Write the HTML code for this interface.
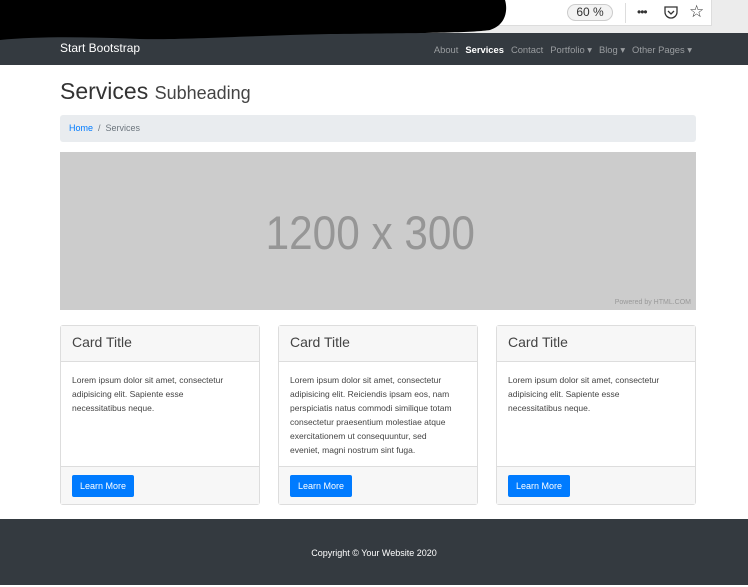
<!DOCTYPE html>
<html><head><meta charset="utf-8"><style>
*{box-sizing:border-box;margin:0;padding:0}
body{width:748px;height:585px;overflow:hidden;font-family:"Liberation Sans",sans-serif;background:#fff;position:relative}
.chrome{position:absolute;left:0;top:0;width:748px;height:33px;background:#ececec}
.chrome .bar{position:absolute;left:0;top:0;width:712px;height:26px;background:#fff;border-bottom:1px solid #ddd;border-right:1px solid #ddd}
.zoom{position:absolute;left:567px;top:4px;width:46px;height:17px;border:1px solid #ccc;border-radius:9px;background:#f3f3f3;font-size:12px;color:#333;text-align:center;line-height:15px}
.sep{position:absolute;left:625px;top:3px;width:1px;height:20px;background:#ddd}
nav{position:absolute;top:33px;left:0;width:748px;height:32px;background:#343a40}
.brand{position:absolute;left:60px;top:8px;color:#fff;font-size:12px}
.links{position:absolute;right:56px;top:11px;font-size:9.4px;color:#9a9da0}
.links span{margin-left:7px}
.links b{color:#fff}
h1{position:absolute;left:60px;top:78px;font-size:23px;font-weight:400;color:#333}
h1 small{font-size:18px;color:#444}
.bc{position:absolute;left:60px;top:115px;width:636px;height:27px;background:#e9ecef;border-radius:3px;font-size:9px;line-height:27px;padding-left:9px;color:#6c757d}
.bc a{color:#007bff}
.img{position:absolute;left:60px;top:152px;width:636px;height:158px;background:#ccc;color:#969696;font-size:47px;text-align:center;line-height:162px}
.img span{display:inline-block;transform:scaleX(0.9);margin-left:-16px}
.img i{position:absolute;right:5px;bottom:3px;font-size:7px;line-height:8px;font-style:normal;color:#999}
.card{position:absolute;top:325px;width:200px;height:180px;border:1px solid #ddd;border-radius:3px;background:#fff}
.ch{height:36px;background:#f7f7f7;border-bottom:1px solid #ddd;font-size:14px;color:#444;padding:8px 11px}
.cb{padding:11px 5px 11px 11px;font-size:8.5px;line-height:14px;color:#444;height:106px;white-space:nowrap}
.cf{position:absolute;left:0;bottom:0;width:198px;height:38px;background:#f7f7f7;border-top:1px solid #ddd}
.btn{position:absolute;left:11px;top:8px;width:62px;height:22px;background:#007bff;color:#fff;font-size:9px;line-height:22px;text-align:center;border-radius:2px}
footer{position:absolute;left:0;top:519px;width:748px;height:66px;background:#343a40;color:#fff;font-size:9px;text-align:center;line-height:68px}
</style></head><body>
<div class="chrome"><div class="bar"></div>
<div class="zoom">60 %</div><div class="sep"></div>
<div style="position:absolute;left:637px;top:5px;font-size:12px;color:#333;letter-spacing:-1px">•••</div>
<svg style="position:absolute;left:664px;top:6px" width="14" height="13"><path d="M1 1H13V6A6 6 0 0 1 1 6Z" fill="none" stroke="#333" stroke-width="1.3"/><path d="M4 5L7 8L10 5" fill="none" stroke="#333" stroke-width="1.3"/></svg>
<div style="position:absolute;left:689px;top:2px;font-size:17px;color:#333">☆</div>
</div>
<nav><div class="brand">Start Bootstrap</div>
<div class="links"><span>About</span><span><b>Services</b></span><span>Contact</span><span>Portfolio ▾</span><span>Blog ▾</span><span>Other Pages ▾</span></div></nav>
<svg style="position:absolute;left:0;top:0;z-index:5" width="520" height="45"><path d="M0 0H505C508 10 506 25 490 30C470 33 420 33 330 34C240 36 180 40 140 39C90 37 40 36 0 40Z" fill="#000"/></svg>
<h1>Services <small>Subheading</small></h1>
<div class="bc"><a>Home</a>&nbsp; / &nbsp;Services</div>
<div class="img"><span>1200 x 300</span><i>Powered by HTML.COM</i></div>
<div class="card" style="left:60px"><div class="ch">Card Title</div><div class="cb">Lorem ipsum dolor sit amet, consectetur<br>adipisicing elit. Sapiente esse<br>necessitatibus neque.</div><div class="cf"><div class="btn">Learn More</div></div></div>
<div class="card" style="left:278px"><div class="ch">Card Title</div><div class="cb">Lorem ipsum dolor sit amet, consectetur<br>adipisicing elit. Reiciendis ipsam eos, nam<br>perspiciatis natus commodi similique totam<br>consectetur praesentium molestiae atque<br>exercitationem ut consequuntur, sed<br>eveniet, magni nostrum sint fuga.</div><div class="cf"><div class="btn">Learn More</div></div></div>
<div class="card" style="left:496px"><div class="ch">Card Title</div><div class="cb">Lorem ipsum dolor sit amet, consectetur<br>adipisicing elit. Sapiente esse<br>necessitatibus neque.</div><div class="cf"><div class="btn">Learn More</div></div></div>
<footer>Copyright © Your Website 2020</footer>
</body></html>
